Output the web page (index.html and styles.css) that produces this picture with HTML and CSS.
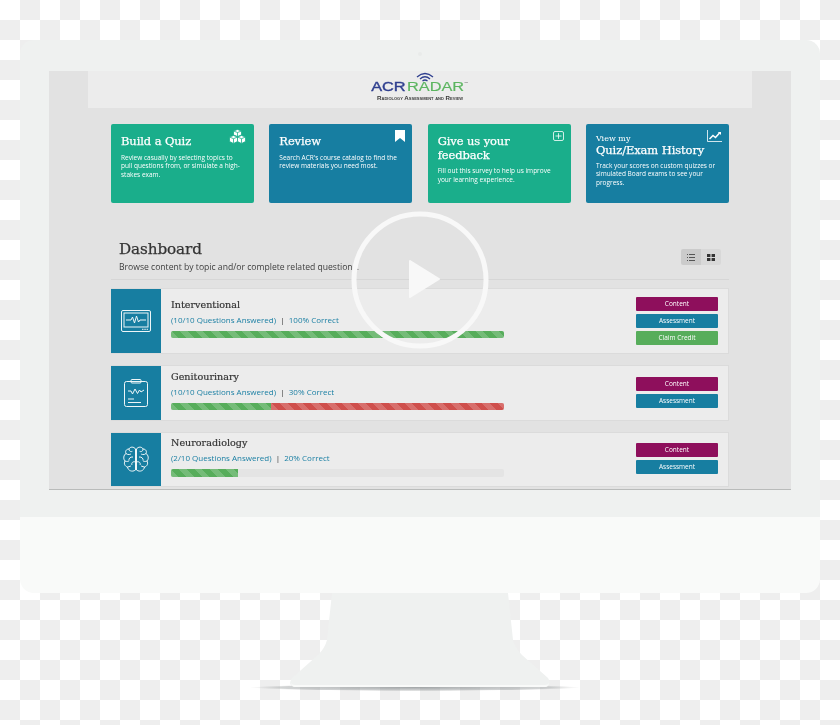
FILE: index.html
```html
<!DOCTYPE html>
<html lang="en">
<head>
    <meta charset="UTF-8">
    <title>ACR Radar Dashboard</title>
    <link rel="stylesheet" href="styles.css">
</head>
<body>
    <div class="monitor">
        <div class="bezel">
            <span class="camera"></span>
            <div class="screen">
                <div class="nav">
                    <div class="logo">
                        <svg class="logo-arcs" width="18" height="10" viewBox="0 0 18 10" fill="none" stroke="#2f3f8f" stroke-width="1.3">
                            <path d="M1 5 Q9 -2 17 5"/>
                            <path d="M4 7 Q9 2.5 14 7"/>
                            <path d="M6.5 9 Q9 7 11.5 9"/>
                        </svg>
                        <div class="logo-name"><span class="logo-acr">ACR</span><span class="logo-radar">RADAR</span><sup class="logo-tm">TM</sup></div>
                        <div class="logo-tag">Radiology Assessment and Review</div>
                    </div>
                </div>

                <div class="main">
                    <div class="tiles">
                        <div class="tile tile-green">
                            <svg class="tile-icon icon-cubes" width="17" height="15" viewBox="0 0 17 15" fill="#fff" stroke="#1aae8b" stroke-width=".8">
                                <path d="M8.5 .5 L12.5 2 L12.5 6 L8.5 7.5 L4.5 6 L4.5 2 Z"/>
                                <path d="M4.5 6.5 L8.5 8 L8.5 12.5 L4.5 14.5 L.5 12.5 L.5 8 Z"/>
                                <path d="M12.5 6.5 L16.5 8 L16.5 12.5 L12.5 14.5 L8.5 12.5 L8.5 8 Z"/>
                                <path d="M4.5 2 L8.5 3.5 L12.5 2 M8.5 3.5 V7.5 M.5 8 L4.5 9.7 L8.5 8 M4.5 9.7 V14.5 M8.5 8 L12.5 9.7 L16.5 8 M12.5 9.7 V14.5" fill="none"/>
                            </svg>
                            <h2 class="tile-title">Build a Quiz</h2>
                            <p class="tile-text">Review casually by selecting topics to pull questions from, or simulate a high-stakes exam.</p>
                        </div>
                        <div class="tile tile-blue">
                            <svg class="tile-icon icon-mark" width="10" height="12" viewBox="0 0 10 12" fill="#fff">
                                <path d="M0 0 H10 V12 L5 8 L0 12 Z"/>
                            </svg>
                            <h2 class="tile-title">Review</h2>
                            <p class="tile-text">Search ACR's course catalog to find the review materials you need most.</p>
                        </div>
                        <div class="tile tile-green">
                            <svg class="tile-icon icon-plus" width="11" height="10" viewBox="0 0 11 10" fill="none" stroke="#fff" stroke-width=".8">
                                <rect x=".5" y=".5" width="10" height="9" rx="1.5"/>
                                <path d="M5.5 2.2 V7.8 M2.5 5 H8.5"/>
                            </svg>
                            <h2 class="tile-title">Give us your feedback</h2>
                            <p class="tile-text">Fill out this survey to help us improve your learning experience.</p>
                        </div>
                        <div class="tile tile-blue">
                            <svg class="tile-icon icon-chart" width="15" height="12" viewBox="0 0 15 12" fill="none" stroke="#fff">
                                <path d="M.5 0 V11.5 H15" stroke-width=".8"/>
                                <path d="M2.5 9 L6 5.5 L8.5 7.5 L12.5 3" stroke-width="1.5"/>
                                <path d="M10.8 2 H14 V5 Z" fill="#fff" stroke="none"/>
                            </svg>
                            <div class="tile-kicker">View my</div>
                            <h2 class="tile-title">Quiz/Exam History</h2>
                            <p class="tile-text tile-text-tight">Track your scores on custom quizzes or simulated Board exams to see your progress.</p>
                        </div>
                    </div>

                    <div class="dash-head">
                        <div>
                            <h1 class="dash-title">Dashboard</h1>
                            <p class="dash-sub">Browse content by topic and/or complete related questions.</p>
                        </div>
                        <div class="view-toggle">
                            <span class="toggle-btn toggle-on">
                                <svg width="8" height="7" viewBox="0 0 8 7" fill="#555"><path d="M0 0h1v1H0zM2 0h6v1H2zM0 3h1v1H0zM2 3h6v1H2zM0 6h1v1H0zM2 6h6v1H2z"/></svg>
                            </span>
                            <span class="toggle-btn">
                                <svg width="8" height="7" viewBox="0 0 8 7" fill="#333"><path d="M0 0h3.4v3H0zM4.6 0H8v3H4.6zM0 4h3.4v3H0zM4.6 4H8v3H4.6z"/></svg>
                            </span>
                        </div>
                    </div>

                    <div class="topics">
                        <div class="topic">
                            <div class="topic-icon">
                                <svg width="30" height="22" viewBox="0 0 30 22" fill="none" stroke="#eef6f8" stroke-width="1">
                                    <rect x=".5" y=".5" width="29" height="21" rx="1.5"/>
                                    <rect x="3" y="3" width="24" height="14"/>
                                    <path d="M5 10 H10 L11.5 7 L13.5 13 L15.5 6 L17.5 12 L19 10 H25"/>
                                    <path d="M21 19.3 H27" stroke-dasharray="1.5 .8"/>
                                </svg>
                            </div>
                            <div class="topic-body">
                                <h3 class="topic-name">Interventional</h3>
                                <div class="topic-meta"><span class="meta-link">(10/10 Questions Answered)</span> &nbsp;|&nbsp; <span class="meta-link">100% Correct</span></div>
                                <div class="bar"><div class="bar-good" style="width: 100%"></div></div>
                            </div>
                            <div class="topic-actions">
                                <span class="btn btn-content">Content</span>
                                <span class="btn btn-assess">Assessment</span>
                                <span class="btn btn-credit">Claim Credit</span>
                            </div>
                        </div>

                        <div class="topic">
                            <div class="topic-icon">
                                <svg width="24" height="28" viewBox="0 0 24 28" fill="none" stroke="#eef6f8" stroke-width="1">
                                    <rect x=".5" y="2.5" width="23" height="25" rx="2"/>
                                    <rect x="7" y=".5" width="10" height="3.5" rx="1"/>
                                    <path d="M4 12 L7 12 L8.5 15 L11 10 L13.5 14.5 L15.5 11 L17 13 L20 11"/>
                                    <path d="M4 20 H10 M4 23.5 H17"/>
                                </svg>
                            </div>
                            <div class="topic-body">
                                <h3 class="topic-name">Genitourinary</h3>
                                <div class="topic-meta"><span class="meta-link">(10/10 Questions Answered)</span> &nbsp;|&nbsp; <span class="meta-link">30% Correct</span></div>
                                <div class="bar"><div class="bar-good" style="width: 30%"></div><div class="bar-bad" style="width: 70%"></div></div>
                            </div>
                            <div class="topic-actions topic-actions-short">
                                <span class="btn btn-content">Content</span>
                                <span class="btn btn-assess">Assessment</span>
                            </div>
                        </div>

                        <div class="topic">
                            <div class="topic-icon">
                                <svg width="26" height="27" viewBox="0 0 26 27" fill="none" stroke="#eef6f8" stroke-width="1">
                                    <path d="M12.5 3 C11 .5 7 .5 6 3 C3 3 2 5.5 3 7.5 C.5 9 0 13 2 15 C.5 17.5 2 20.5 4.5 21 C5 24.5 9 26.5 12.5 24 Z"/>
                                    <path d="M13.5 3 C15 .5 19 .5 20 3 C23 3 24 5.5 23 7.5 C25.5 9 26 13 24 15 C25.5 17.5 24 20.5 21.5 21 C21 24.5 17 26.5 13.5 24 Z"/>
                                    <path d="M6 3 C6 6 9 6 9.5 5 M3 7.5 C5 9.5 8 8 8 8 M10 11 C7 10.5 5.5 13 6 14.5 M2 15 C4 16 6 15 6 15 M12.5 16 C10 15 8 17 9 19 M4.5 21 C6.5 20.5 8 20 8 20"/>
                                    <path d="M20 3 C20 6 17 6 16.5 5 M23 7.5 C21 9.5 18 8 18 8 M16 11 C19 10.5 20.5 13 20 14.5 M24 15 C22 16 20 15 20 15 M13.5 16 C16 15 18 17 17 19 M21.5 21 C19.5 20.5 18 20 18 20"/>
                                </svg>
                            </div>
                            <div class="topic-body">
                                <h3 class="topic-name">Neuroradiology</h3>
                                <div class="topic-meta"><span class="meta-link">(2/10 Questions Answered)</span> &nbsp;|&nbsp; <span class="meta-link">20% Correct</span></div>
                                <div class="bar"><div class="bar-good" style="width: 20%"></div></div>
                            </div>
                            <div class="topic-actions topic-actions-short">
                                <span class="btn btn-content">Content</span>
                                <span class="btn btn-assess">Assessment</span>
                            </div>
                        </div>
                    </div>
                </div>

                <!-- play overlay -->
                <svg class="play" width="138" height="138" viewBox="0 0 138 138">
                    <circle cx="69" cy="69" r="66" fill="none" stroke="#f8f8f8" stroke-width="5"/>
                    <path d="M59 50 L88 68 L59 86 Z" fill="#f8f8f8" stroke="#f8f8f8" stroke-width="2" stroke-linejoin="round"/>
                </svg>
            </div>
        </div>
        <div class="chin"></div>
    </div>

    <svg class="stand" width="340" height="100" viewBox="0 0 340 100">
        <defs>
            <radialGradient id="standShadow">
                <stop offset="0" stop-color="#8f9496" stop-opacity=".8"/>
                <stop offset=".82" stop-color="#a5a9aa" stop-opacity=".5"/>
                <stop offset="1" stop-color="#bbb" stop-opacity="0"/>
            </radialGradient>
        </defs>
        <ellipse cx="165" cy="94.5" rx="165" ry="3.5" fill="url(#standShadow)"/>
        <path d="M82 0 H258 L263 47 Q265 55 272 62 L298 85 Q303 93 295 94 H45 Q37 93 42 85 L68 62 Q75 55 77 47 Z" fill="#eff1f0"/>
        <path d="M41 90 Q42 94 45 94 H295 Q298 94 299 90 Q298 92 295 92 H45 Q42 92 41 90 Z" fill="#f9faf9"/>
    </svg>
</body>
</html>
```
FILE: styles.css
```css
body {
    margin: 0;
    height: 725px;
    overflow: hidden;
    font-family: "Open Sans", "Liberation Sans", sans-serif;
    background-color: #fff;
    background-image: conic-gradient(#eeeeee 25%, #ffffff 25% 50%, #eeeeee 50% 75%, #ffffff 75%);
    background-size: 40px 40px;
}
h1, h2, h3, p {
    margin: 0;
    font-weight: normal;
}

/* monitor frame */
.monitor {
    margin: 40px 20px 0;
    height: 553px;
    display: flex;
    flex-direction: column;
    border-radius: 14px;
    overflow: hidden;
}
.bezel {
    position: relative;
    height: 477px;
    padding: 31px 29px 0;
    box-sizing: border-box;
    background-color: #eff1f0;
}
.camera {
    position: absolute;
    top: 12px;
    left: 398px;
    width: 4px;
    height: 4px;
    border-radius: 50%;
    background-color: #e9ebea;
}
.chin {
    flex: 1;
    background-color: #f9faf9;
}
.screen {
    position: relative;
    height: 419px;
    box-sizing: border-box;
    overflow: hidden;
    background-color: #e2e2e2;
    border-bottom: 1px solid #b9bbba;
    filter: blur(.35px);
}

/* top nav */
.nav {
    margin: 0 39px;
    height: 37px;
    display: flex;
    justify-content: center;
    background-color: #ececec;
}
.logo {
    width: 102px;
    display: flex;
    flex-direction: column;
    align-items: center;
    font-family: "Liberation Sans", Arial, sans-serif;
}
.logo-arcs {
    display: block;
    margin: 1px 0 0 9px;
}
.logo-name {
    height: 10px;
    font-size: 12px;
    line-height: 10px;
    white-space: nowrap;
    transform: scaleX(1.36);
}
.logo-acr {
    color: #2f3f8f;
    -webkit-text-stroke: .35px #2f3f8f;
}
.logo-radar {
    color: #5cb560;
    margin-left: 1px;
    -webkit-text-stroke: .15px #5cb560;
}
.logo-tm {
    font-size: 2px;
    color: #555;
    vertical-align: 8px;
    line-height: 0;
}
.logo-tag {
    margin-top: 3px;
    font-size: 6.2px;
    line-height: 6px;
    font-weight: bold;
    font-variant: small-caps;
    color: #3a3a3a;
    white-space: nowrap;
}

/* main content */
.main {
    padding: 16px 62px 0;
}
.tiles {
    display: grid;
    grid-template-columns: repeat(4, 1fr);
    gap: 15.33px;
}
.tile {
    position: relative;
    height: 79px;
    box-sizing: border-box;
    padding: 11px 11.5px 0 10px;
    border-radius: 2px;
    color: #fff;
}
.tile-green {
    background-color: #1aae8b;
}
.tile-blue {
    background-color: #177ea1;
}
.tile-title {
    font-family: "DejaVu Serif", "Liberation Serif", serif;
    font-size: 11.5px;
    line-height: 13.5px;
    letter-spacing: -.1px;
    -webkit-text-stroke: .25px #fff;
}
.tile-kicker {
    margin-top: -1px;
    font-family: "DejaVu Serif", "Liberation Serif", serif;
    font-size: 8px;
    line-height: 10px;
}
.tile-text {
    margin-top: 5px;
    font-size: 6.5px;
    line-height: 8.7px;
    font-weight: 500;
}
.tile-text-tight {
    margin-top: 4px;
}
.tile-icon {
    position: absolute;
}
.icon-cubes {
    top: 5px;
    right: 8px;
}
.icon-mark {
    top: 6px;
    right: 7px;
}
.icon-plus {
    top: 7px;
    right: 7px;
}
.icon-chart {
    top: 6px;
    right: 7px;
}

.dash-head {
    margin-top: 37px;
    height: 39px;
    padding: 0 8px;
    display: flex;
    justify-content: space-between;
    align-items: flex-start;
    border-bottom: 1px solid #d6d6d6;
}
.dash-title {
    font-family: "DejaVu Serif", "Liberation Serif", serif;
    font-size: 15.2px;
    line-height: 18px;
    letter-spacing: -.1px;
    color: #333;
    -webkit-text-stroke: .25px #333;
}
.dash-sub {
    margin-top: 3px;
    font-size: 8.6px;
    line-height: 12px;
    color: #3d3d3d;
    white-space: nowrap;
}
.view-toggle {
    display: flex;
    margin-top: 9px;
}
.toggle-btn {
    width: 20px;
    height: 16px;
    display: flex;
    align-items: center;
    justify-content: center;
    background-color: #d8d8d8;
    border-radius: 0 2px 2px 0;
}
.toggle-on {
    background-color: #cbcbcb;
    border-radius: 2px 0 0 2px;
}

/* topic rows */
.topics {
    margin-top: 8px;
    display: flex;
    flex-direction: column;
    gap: 11px;
}
.topic {
    min-height: 55.5px;
    display: flex;
    box-sizing: border-box;
    background-color: #ececec;
    border: 1px solid #dbdbdb;
    border-left: none;
}
.topic-icon {
    width: 50px;
    display: flex;
    align-items: center;
    justify-content: center;
    background-color: #177ea1;
}
.topic-body {
    flex: 1;
    padding: 0 0 5px 10px;
    display: flex;
    flex-direction: column;
    justify-content: center;
}
.topic-name {
    font-family: "DejaVu Serif", "Liberation Serif", serif;
    font-size: 9.6px;
    line-height: 12px;
    color: #333;
    -webkit-text-stroke: .2px #333;
}
.topic-meta {
    margin-top: 3px;
    font-size: 8px;
    line-height: 12px;
    color: #333;
}
.meta-link {
    color: #1a7fa3;
}
.bar {
    margin-top: 5px;
    width: 333px;
    height: 7.5px;
    display: flex;
    border-radius: 2px;
    overflow: hidden;
    background-color: #e4e4e4;
}
.bar-good, .bar-bad {
    height: 100%;
    background-image: repeating-linear-gradient(45deg, rgba(255,255,255,.18) 0 5.5px, transparent 5.5px 11px);
}
.bar-good {
    background-color: #57ad5b;
}
.bar-bad {
    background-color: #cf4f4c;
}
.topic-actions {
    width: 82px;
    margin-right: 10px;
    padding: 8px 0;
    display: flex;
    flex-direction: column;
    gap: 3px;
}
.topic-actions-short {
    padding: 10.7px 0 0;
}
.btn {
    height: 14px;
    border-radius: 1px;
    color: #fff;
    font-size: 6.5px;
    font-weight: 500;
    line-height: 14px;
    text-align: center;
}
.btn-content {
    background-color: #8e0f5c;
}
.btn-assess {
    background-color: #177ea1;
}
.btn-credit {
    background-color: #57ad5b;
}

.play {
    position: absolute;
    left: 302px;
    top: 140px;
}

.stand {
    display: block;
    margin: 0 auto;
}
```
